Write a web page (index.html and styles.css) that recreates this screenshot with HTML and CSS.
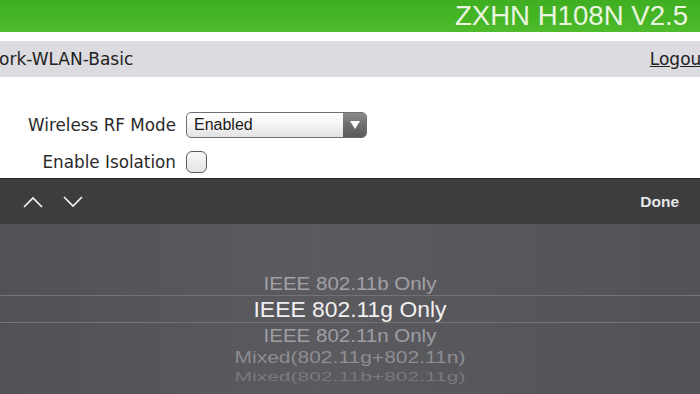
FILE: index.html
```html
<!DOCTYPE html>
<html>
<head>
<meta charset="utf-8">
<link rel="stylesheet" href="styles.css">
</head>
<body>
<div class="page">
  <header class="brand">
    <span class="brand-title">ZXHN H108N V2.5</span>
  </header>
  <div class="gap"></div>
  <nav class="crumb">
    <span class="crumb-path">ork-WLAN-Basic</span>
    <a class="logout" href="#">Logout</a>
  </nav>
  <main class="form">
    <div class="row row-select">
      <label class="label">Wireless RF Mode</label>
      <div class="select">
        <span class="select-value">Enabled</span>
        <span class="select-btn">
          <svg width="10" height="8" viewBox="0 0 10 8"><path d="M0 0 H10 L5 8 Z" fill="#fff"/></svg>
        </span>
      </div>
    </div>
    <div class="row row-check">
      <label class="label label-iso">Enable Isolation</label>
      <span class="checkbox"></span>
    </div>
  </main>
  <div class="toolbar">
    <div class="arrows">
      <svg class="chev" width="22" height="14" viewBox="0 0 22 14"><path d="M2 12 L11 3 L20 12" fill="none" stroke="#f2f2f2" stroke-width="1.7"/></svg>
      <svg class="chev" width="22" height="14" viewBox="0 0 22 14"><path d="M2 2 L11 11 L20 2" fill="none" stroke="#f2f2f2" stroke-width="1.7"/></svg>
    </div>
    <span class="done">Done</span>
  </div>
  <div class="picker">
    <div class="opt opt-1">IEEE 802.11b Only</div>
    <div class="opt opt-sel">IEEE 802.11g Only</div>
    <div class="opt opt-3">IEEE 802.11n Only</div>
    <div class="opt opt-4">Mixed(802.11g+802.11n)</div>
    <div class="opt opt-5">Mixed(802.11b+802.11g)</div>
  </div>
</div>
</body>
</html>
```
FILE: styles.css
```css
html, body {
  margin: 0;
  padding: 0;
  width: 700px;
  height: 394px;
  overflow: hidden;
  background: #fff;
}
.page {
  width: 700px;
  height: 394px;
  display: flex;
  flex-direction: column;
  overflow: hidden;
}
.brand {
  height: 32px;
  flex: none;
  background: linear-gradient(180deg, #3fae21 0%, #46b525 60%, #4fbb2c 100%);
  display: flex;
  justify-content: flex-end;
  align-items: flex-end;
  padding-right: 12px;
}
.brand-title {
  font-family: "Liberation Sans", Arial, sans-serif;
  font-size: 27.6px;
  line-height: 30px;
  color: #eaf5e0;
  margin-bottom: 1px;
}
.gap {
  height: 9px;
  flex: none;
  background: #fdfdfb;
}
.crumb {
  height: 36px;
  flex: none;
  background: #dcdbe0;
  display: flex;
  align-items: center;
  justify-content: space-between;
  font-family: "DejaVu Sans", Verdana, sans-serif;
  font-size: 17px;
  color: #222;
}
.crumb-path {
  margin-left: -1px;
}
.logout {
  color: #222;
  text-decoration: underline;
  margin-right: -8px;
}
.form {
  height: 101px;
  flex: none;
  background: #fff;
  font-family: "DejaVu Sans", Verdana, sans-serif;
  font-size: 16.8px;
  color: #2a2a2a;
  display: flex;
  flex-direction: column;
  padding-top: 35px;
  box-sizing: border-box;
}
.row {
  display: flex;
  align-items: center;
}
.label {
  width: 186px;
  text-align: right;
  padding-right: 10px;
  box-sizing: border-box;
}
.row-select {
  height: 26px;
}
.row-check {
  height: 23px;
  margin-top: 12px;
}
.select {
  width: 181px;
  height: 26px;
  box-sizing: border-box;
  border: 1px solid #6e6e70;
  border-radius: 5px;
  background: linear-gradient(180deg, #ffffff 0%, #f4f4f4 50%, #e2e2e2 100%);
  display: flex;
  overflow: hidden;
}
.select-value {
  flex: 1;
  font-family: "Liberation Sans", Arial, sans-serif;
  font-size: 16px;
  line-height: 24px;
  color: #1a1a1a;
  padding-left: 7px;
}
.select-btn {
  width: 23px;
  background: linear-gradient(180deg, #8a8a8c 0%, #6c6c6e 55%, #5a5a5c 100%);
  display: flex;
  align-items: center;
  justify-content: center;
}
.checkbox {
  width: 21px;
  height: 22px;
  box-sizing: border-box;
  border: 1.5px solid #5a5a5c;
  border-radius: 6px;
  background: linear-gradient(180deg, #f8f8f8 0%, #e4e4e4 100%);
}
.toolbar {
  height: 46px;
  flex: none;
  background: #3d3d40;
  border-top: 1px solid #2a2a2c;
  box-sizing: border-box;
  display: flex;
  align-items: center;
  justify-content: space-between;
  padding: 0 21px 0 22px;
}
.arrows {
  display: flex;
  gap: 18px;
  margin-top: 1px;
}
.chev {
  display: block;
}
.done {
  font-family: "Liberation Sans", Arial, sans-serif;
  font-size: 15.5px;
  font-weight: bold;
  color: #e6e6e6;
}
.picker {
  flex: 1;
  background: linear-gradient(90deg, #525156 0%, #5b5a5f 45%, #59585d 60%, #535257 100%);
  display: flex;
  flex-direction: column;
  align-items: stretch;
  padding-top: 48px;
  font-family: "Liberation Sans", Arial, sans-serif;
  text-align: center;
}
.opt {
  display: flex;
  align-items: center;
  justify-content: center;
  white-space: nowrap;
}
.opt-1 {
  height: 23px;
  font-size: 20.5px;
  color: #a2a1a6;
  transform: scaleY(0.93);
}
.opt-sel {
  height: 26px;
  font-size: 22.9px;
  color: #f0f0f0;
  border-top: 1px solid #747378;
  border-bottom: 1px solid #747378;
}
.opt-3 {
  height: 25px;
  font-size: 20.5px;
  color: #9f9ea3;
  transform: scaleY(0.9);
}
.opt-4 {
  height: 20px;
  font-size: 21px;
  color: #8e8d92;
  transform: scaleY(0.78);
}
.opt-5 {
  height: 17px;
  font-size: 21px;
  color: #7a797e;
  transform: scaleY(0.6);
}
```
